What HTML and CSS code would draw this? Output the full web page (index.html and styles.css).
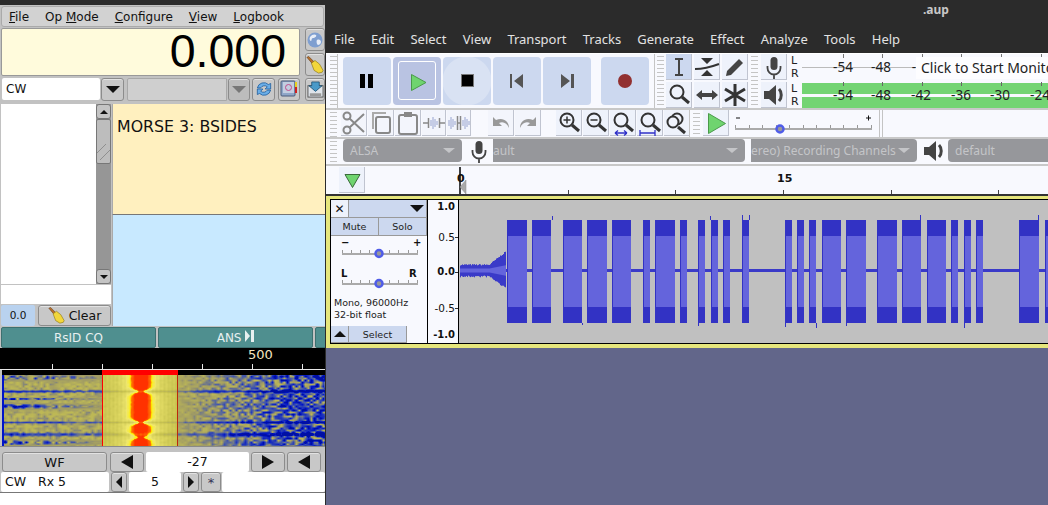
FILE: index.html

```html
<!DOCTYPE html>
<html lang="en">
<head>
  <meta charset="UTF-8" />
  <title>fldigi and Audacity</title>
  <link rel="stylesheet" href="styles.css">
</head>
<body>
  <svg class="defs" width="0" height="0">
    <symbol id="broom" viewBox="0 0 20 20">
      <path d="M1 1.500l2-1 6 6-2 2z" fill="#b8702a" stroke="#5a3412" stroke-width=".6"/>
      <path d="M6 8l4-3 5 4 4 7-1 2-4 1-5-3z" fill="#f2d63c" stroke="#8a7410" stroke-width=".7"/>
    </symbol>
    <symbol id="mic" viewBox="0 0 26 26">
      <rect x="9.500" y="3" width="7" height="13" rx="3.500" fill="#444"/>
      <path d="M6.500 12v2a6.500 6.500 0 0 0 13 0v-2M13 21v4" fill="none" stroke="#444" stroke-width="1.800"/>
    </symbol>
    <symbol id="speaker" viewBox="0 0 26 26">
      <path d="M3 9h5l7-6v20l-7-6H3z" fill="#444"/>
      <path d="M18 7c3 3 3 9 0 12" fill="none" stroke="#444" stroke-width="3"/>
    </symbol>
    <symbol id="glass" viewBox="0 0 26 26">
      <circle cx="11" cy="10" r="6.500" fill="none" stroke="#333" stroke-width="2"/>
      <path d="M16 15l7 6" stroke="#333" stroke-width="3"/>
    </symbol>
  </svg>

  <!-- fldigi window -->
  <div class="fl">
    <div class="fl-menu">
      <span><u>F</u>ile</span><span>Op <u>M</u>ode</span><span><u>C</u>onfigure</span><span><u>V</u>iew</span><span><u>L</u>ogbook</span>
    </div>
    <div class="fl-freq">
      <div class="freq-display">0.000</div>
      <div class="freq-btns">
        <button class="fbtn tall">
          <svg width="16" height="16" viewBox="0 0 16 16"><circle cx="8" cy="8" r="7.500" fill="#7f9fd0"/><path d="M3 5c2-3 5-3 6-2s-1 3-3 3-1 3-2 3-2-2-1-4zM10 8c2-1 4 0 4 2s-2 3-3 3-2-4-1-5z" fill="#e8eef8"/></svg>
        </button>
        <button class="fbtn tall"><svg width="18" height="18"><use href="#broom"/></svg></button>
      </div>
    </div>
    <div class="fl-mode">
      <div class="field cw">CW</div>
      <button class="fbtn arrow"><i class="tri-down"></i></button>
      <div class="field off"></div>
      <button class="fbtn arrow off-btn"><i class="tri-down gray"></i></button>
      <button class="fbtn sq">
        <svg width="20" height="20" viewBox="0 0 18 18"><path d="M3 8a6 6 0 0 1 10-3l2-1v5h-5l2-2a4 4 0 0 0-6 1z" fill="#6aaee8" stroke="#1c5a9a" stroke-width=".7"/><path d="M15 10a6 6 0 0 1-10 3l-2 1V9h5l-2 2a4 4 0 0 0 6-1z" fill="#6aaee8" stroke="#1c5a9a" stroke-width=".7"/></svg>
      </button>
      <button class="fbtn sq book">
        <svg width="18" height="18" viewBox="0 0 18 18"><rect x="1" y="1" width="14" height="15" rx="1" fill="#8fa6c8" stroke="#4a5a7a"/><rect x="3" y="2" width="11" height="11" fill="#c3cde0"/><circle cx="8.500" cy="7.500" r="3" fill="none" stroke="#c04a8a"/><rect x="15" y="2" width="2" height="5" fill="#e8d020"/><rect x="15" y="7" width="2" height="6" fill="#d02020"/></svg>
      </button>
      <button class="fbtn sq last">
        <svg width="17" height="17" viewBox="0 0 18 18"><rect x="1" y="5" width="16" height="12" fill="#dfe4ea" stroke="#555"/><rect x="3" y="13" width="12" height="3" fill="#999"/><path d="M5 1h8v4h3l-7 6-7-6h3z" fill="#4a9ac8" stroke="#1c4a6a" stroke-width=".8"/></svg>
      </button>
    </div>
    <div class="fl-main">
      <div class="fl-side">
        <div class="listbox">
          <div class="list-white"></div>
          <div class="scroll">
            <button class="sbtn"><i class="tri-up"></i></button>
            <div class="sthumb"></div>
            <div class="strack"></div>
            <button class="sbtn"><i class="tri-down small"></i></button>
          </div>
        </div>
        <div class="side-input"></div>
        <div class="side-foot">
          <div class="val">0.0</div>
          <button class="fbtn clear"><svg width="17" height="17"><use href="#broom"/></svg>Clear</button>
        </div>
      </div>
      <div class="fl-text">
        <div class="rx">MORSE 3: BSIDES</div>
        <div class="tx"></div>
      </div>
    </div>
    <div class="fl-macros">
      <button class="macro m1">RsID CQ</button>
      <button class="macro m2">ANS <svg width="9" height="12" viewBox="0 0 9 12"><path d="M0 0l5 6-5 6z" fill="#e8f0f0"/><rect x="6" width="3" height="12" fill="#e8f0f0"/></svg></button>
      <button class="macro m3"></button>
    </div>
    <svg class="fl-scale" width="325" height="22">
      <rect width="325" height="22" fill="#000"/>
      <rect y="21" width="325" height="1" fill="#e8e8e8"/>
      <path d="M52.500 16v5M102.500 16v5M152.500 16v5M202.500 16v5M252.500 16v5M302.500 16v5" stroke="#e8e8e8"/>
      <text x="248" y="11" class="scale-num">500</text>
    </svg>
    <canvas id="waterfall" class="waterfall" width="323" height="76"></canvas>
    <div class="fl-ctrl">
      <button class="fbtn wf">WF</button>
      <button class="fbtn nudge"><i class="tri-left"></i></button>
      <div class="field db">-27</div>
      <button class="fbtn nudge"><i class="tri-right"></i></button>
      <button class="fbtn nudge"><i class="tri-left"></i></button>
    </div>
    <div class="fl-status">
      <div class="field st-mode">CW&nbsp;&nbsp;&nbsp;Rx 5</div>
      <button class="fbtn step"><i class="tri-left thin"></i></button>
      <div class="field st-num">5</div>
      <button class="fbtn step"><i class="tri-right thin"></i></button>
      <button class="fbtn star">*</button>
      <div class="field st-rest"></div>
    </div>
    <div class="fl-foot"></div>
  </div>

  <!-- audacity window -->
  <div class="au">
    <div class="au-title">.aup</div>
    <div class="au-menu">
      <span>File</span><span>Edit</span><span>Select</span><span>View</span><span>Transport</span><span>Tracks</span><span>Generate</span><span>Effect</span><span>Analyze</span><span>Tools</span><span>Help</span>
    </div>

    <div class="tb tb1">
      <div class="grip"></div>
      <div class="transport">
        <button class="tbtn">
          <svg width="48" height="48"><path d="M17 17h5v14h-5zM25 17h5v14h-5z" fill="#000"/></svg>
        </button>
        <button class="tbtn pressed">
          <svg width="48" height="48"><path d="M18.500 17.500l14.500 8-14.500 8z" fill="#6fd46f" stroke="#4a9a4a"/></svg>
        </button>
        <button class="tbtn hover">
          <svg width="48" height="48"><rect x="18.500" y="17.500" width="12" height="12" fill="#000" stroke="#777"/></svg>
        </button>
        <button class="tbtn">
          <svg width="48" height="48"><path d="M17 17h2v14h-2zM30 17v14l-9-7z" fill="#555"/></svg>
        </button>
        <button class="tbtn">
          <svg width="48" height="48"><path d="M18 17v14l9-7zM28 17h3v14h-3z" fill="#555"/></svg>
        </button>
        <button class="tbtn rec">
          <svg width="48" height="48"><circle cx="24" cy="24" r="7" fill="#923030"/></svg>
        </button>
      </div>
      <div class="vsep"></div>
      <div class="grip"></div>
      <div class="tools">
        <button class="tool on"><svg width="26" height="26"><path d="M9 5h8M9 21h8M13 5v16" stroke="#444" stroke-width="2" fill="none"/></svg></button>
        <button class="tool"><svg width="26" height="26"><path d="M7 4h12l-6 6zM7 22h12l-6-6z" fill="#333"/><path d="M1 15c8 0 16-2 24-5" stroke="#333" stroke-width="2" fill="none"/></svg></button>
        <button class="tool"><svg width="26" height="26"><path d="M4 22l1-5L17 5l4 4L9 21z" fill="#444"/></svg></button>
        <button class="tool"><svg width="26" height="26"><use href="#glass"/></svg></button>
        <button class="tool"><svg width="26" height="26"><path d="M2 13l6-5v3h10V8l6 5-6 5v-3H8v3z" fill="#444"/></svg></button>
        <button class="tool"><svg width="26" height="26"><path d="M13 2v22M3 7l20 12M23 7L3 19" stroke="#333" stroke-width="3"/></svg></button>
      </div>
      <div class="grip"></div>
      <div class="meters">
        <div class="meter-row">
          <button class="tool"><svg width="26" height="26"><use href="#mic"/></svg></button>
          <div class="lr"><span>L</span><span>R</span></div>
          <svg class="meter" width="246" height="27">
            <path d="M0 13.500h115" stroke="#bbb"/>
            <path d="M41.500 0v4M80.500 0v4M120.500 0v4M159.500 0v4M199.500 0v4M239.500 0v4" stroke="#777"/>
            <text x="41" y="18" class="mtxt">-54</text><text x="79" y="18" class="mtxt">-48</text><text x="112" y="18" class="mtxt">-</text>
          </svg>
          <div class="monitor">Click to Start Monitoring</div>
        </div>
        <div class="meter-row low">
          <button class="tool"><svg width="26" height="26"><use href="#speaker"/></svg></button>
          <div class="lr"><span>L</span><span>R</span></div>
          <svg class="meter" width="246" height="26">
            <rect y="1" width="246" height="11" fill="#73d473"/><rect y="15" width="246" height="11" fill="#73d473"/>
            <path d="M41.500 0v4M80.500 0v4M120.500 0v4M159.500 0v4M199.500 0v4M239.500 0v4" stroke="#666"/>
            <text x="41" y="18" class="mtxt">-54</text><text x="79" y="18" class="mtxt">-48</text><text x="119" y="18" class="mtxt">-42</text><text x="159" y="18" class="mtxt">-36</text><text x="198" y="18" class="mtxt">-30</text><text x="238" y="18" class="mtxt">-24</text>
          </svg>
        </div>
      </div>
    </div>

    <div class="tb tb2">
      <div class="grip"></div>
      <button class="tool ghost"><svg width="26" height="26"><circle cx="6" cy="20" r="3.500" fill="none" stroke="#888" stroke-width="2"/><circle cx="6" cy="6" r="3.500" fill="none" stroke="#888" stroke-width="2"/><path d="M8 8l15 14M8 18L23 4" stroke="#888" stroke-width="2"/></svg></button>
      <button class="tool ghost"><svg width="26" height="26"><path d="M5 19V3h13" fill="none" stroke="#aaa" stroke-width="2"/><rect x="8" y="7" width="14" height="16" rx="2" fill="none" stroke="#888" stroke-width="2"/></svg></button>
      <button class="tool ghost"><svg width="26" height="26"><rect x="4" y="5" width="18" height="19" rx="2" fill="none" stroke="#888" stroke-width="2"/><rect x="9" y="2" width="8" height="5" fill="#888"/></svg></button>
      <button class="tool ghost slim"><svg width="24" height="26"><path d="M1 13h5M18 13h5" stroke="#888" stroke-width="1.500"/><path d="M6.500 8v10M17.500 8v10" stroke="#888" stroke-width="1.500"/><path d="M9 10v6M11 7v12M13 9v8M15 11v4" stroke="#98a4d0"/></svg></button>
      <button class="tool ghost slim"><svg width="24" height="26"><path d="M10.500 6v14M13.500 6v14M11 13h2" stroke="#888" stroke-width="1.500"/><path d="M2 10v6M4 7v12M6 9v8M8 11v4M16 10v6M18 7v12M20 9v8M22 11v4" stroke="#98a4d0"/></svg></button>
      <div class="tb-gap"></div>
      <button class="tool ghost"><svg width="26" height="26"><path d="M5 7v9h9l-3-3c4-2 8 0 10 5 0-7-6-11-13-8z" fill="#999"/></svg></button>
      <button class="tool ghost"><svg width="26" height="26"><path d="M21 7v9h-9l3-3c-4-2-8 0-10 5 0-7 6-11 13-8z" fill="#999"/></svg></button>
      <div class="tb-gap small"></div>
      <button class="tool"><svg width="26" height="26"><use href="#glass"/><path d="M7.500 10h7M11 6.500v7" stroke="#333" stroke-width="1.500"/></svg></button>
      <button class="tool"><svg width="26" height="26"><use href="#glass"/><path d="M7.500 10h7" stroke="#333" stroke-width="1.500"/></svg></button>
      <button class="tool"><svg width="26" height="26"><use href="#glass"/><path d="M5 23h12M5 23l3-2.500M5 23l3 2.500M17 23l-3-2.500M17 23l-3 2.500" stroke="#3030c8" stroke-width="1.300" fill="none"/></svg></button>
      <button class="tool"><svg width="26" height="26"><use href="#glass"/><path d="M3 23h15M3 20v6M18 20v6" stroke="#3030c8" stroke-width="1.300" fill="none"/></svg></button>
      <button class="tool"><svg width="26" height="26"><circle cx="13" cy="9" r="5.500" fill="none" stroke="#333" stroke-width="2"/><circle cx="9" cy="12" r="5.500" fill="#f0f3fc" stroke="#333" stroke-width="2"/><path d="M14 17l7 6" stroke="#333" stroke-width="3"/></svg></button>
      <div class="vsep mid"></div>
      <div class="grip short"></div>
      <button class="tool"><svg width="26" height="26"><path d="M5.500 3.500l17 10-17 10z" fill="#6fd46f" stroke="#4a9a4a"/></svg></button>
      <svg class="gain" width="142" height="27">
        <path d="M3 8h4M133 8h5M135.500 5.500v5" stroke="#111"/>
        <path d="M2 19h137" stroke="#aaa" stroke-width="2"/>
        <path d="M2.500 15v3M16.500 15v3M29.500 15v3M43.500 15v3M56.500 15v3M70.500 15v3M83.500 15v3M97.500 15v3M110.500 15v3M124.500 15v3M138.500 15v3" stroke="#999"/>
        <circle cx="47" cy="19" r="3.500" fill="#999" stroke="#4f5ce8" stroke-width="2.500"/>
      </svg>
      <div class="vsep end"></div>
    </div>

    <div class="tb tb3">
      <div class="grip"></div>
      <div class="combo alsa">ALSA<i class="tri-down pale"></i></div>
      <svg class="dev-ic" width="26" height="26"><use href="#mic"/></svg>
      <div class="combo rec-dev">ault<i class="tri-down pale"></i></div>
      <div class="combo chans"><span class="clip">ereo) Recording Channels</span><i class="tri-down pale"></i></div>
      <svg class="dev-ic spk" width="26" height="26"><use href="#speaker"/></svg>
      <div class="combo play-dev">default</div>
    </div>

    <div class="timeline">
      <button class="tool green"><svg width="26" height="26"><path d="M6 7.500h15l-7.500 13z" fill="#6fd46f" stroke="#3a6a3a"/></svg></button>
      <svg class="time-svg" width="683" height="28">
        <path d="M95 1v27" stroke="#000" stroke-width="1.500"/>
        <path d="M101 14v14l-6-7z" fill="#aaa" stroke="#888" stroke-width=".5"/>
        <path d="M203.500 24v4M310.500 24v4M418.500 24v4M526.500 24v4M633.500 24v4" stroke="#444"/>
        <text x="92" y="16" class="time-num">0</text>
        <text x="412" y="16" class="time-num">15</text>
      </svg>
    </div>

    <div class="track">
      <div class="track-panel">
        <div class="tp-top">
          <button class="pbtn close">✕</button>
          <button class="pbtn name"><i class="tri-down"></i></button>
        </div>
        <div class="tp-ms">
          <button class="pbtn">Mute</button>
          <button class="pbtn">Solo</button>
        </div>
        <svg class="tp-slider" width="96" height="30">
          <text x="10" y="10" class="pm">−</text><text x="82" y="10" class="pm">+</text>
          <path d="M11 18h76" stroke="#aaa" stroke-width="2"/>
          <path d="M11.500 14v3M20.500 14v3M29.500 14v3M38.500 14v3M48.500 14v3M58.500 14v3M67.500 14v3M77.500 14v3M86.500 14v3" stroke="#999"/>
          <circle cx="48" cy="17.500" r="3.500" fill="#999" stroke="#4f5ce8" stroke-width="2.500"/>
        </svg>
        <svg class="tp-slider" width="96" height="30">
          <text x="10" y="11" class="pm">L</text><text x="78" y="11" class="pm">R</text>
          <path d="M11 18h76" stroke="#aaa" stroke-width="2"/>
          <path d="M11.500 14v3M20.500 14v3M29.500 14v3M38.500 14v3M48.500 14v3M58.500 14v3M67.500 14v3M77.500 14v3M86.500 14v3" stroke="#999"/>
          <circle cx="48" cy="17.500" r="3.500" fill="#999" stroke="#4f5ce8" stroke-width="2.500"/>
        </svg>
        <div class="tp-info">Mono, 96000Hz<br>32-bit float</div>
        <div class="tp-foot">
          <button class="pbtn collapse"><i class="tri-up"></i></button>
          <button class="pbtn select">Select</button>
        </div>
      </div>
      <div class="vruler">
        <span class="b l1">1.0</span><span class="l2">0.5</span><span class="b l3">0.0</span><span class="l4">-0.5</span><span class="b l5">-1.0</span>
      </div>
      <svg id="wave" class="wave" width="589" height="145"></svg>
    </div>
  </div>

  <script src="app.js"></script>
</body>
</html>
```

FILE: styles.css

```css
* { box-sizing: border-box; }
html, body {
  margin: 0;
  width: 1048px;
  height: 505px;
  overflow: hidden;
  background: #2b2b2b;
}
.defs { position: absolute; }
button { margin: 0; padding: 0; font: inherit; color: inherit; }
i { display: block; width: 0; height: 0; }

.tri-down { border: 7px solid transparent; border-top: 7px solid #111; border-bottom: 0; }
.tri-down.gray { border-top-color: #777; }
.tri-down.small { border-width: 4px; border-bottom: 0; border-top-color: #111; }
.tri-down.pale { flex: none; border-width: 5px 6px 0; border-top-color: #c4c5c8; }
.tri-up { border: 4px solid transparent; border-bottom: 4px solid #111; border-top: 0; }
.tri-left { border: 7px solid transparent; border-right: 12px solid #111; border-left: 0; }
.tri-right { border: 7px solid transparent; border-left: 12px solid #111; border-right: 0; }
.tri-left.thin { border-width: 6px 6px 6px 0; }
.tri-right.thin { border-width: 6px 0 6px 6px; }

/* fldigi */
.fl {
  position: absolute;
  left: 0;
  top: 5px;
  width: 325px;
  height: 500px;
  background: #c2c2c2;
  font-family: "DejaVu Sans", sans-serif;
  font-size: 12px;
  color: #111;
  overflow: hidden;
}
.fbtn {
  display: flex;
  flex: none;
  align-items: center;
  justify-content: center;
  background: #c8c8c8;
  border: 1px solid #8c8c8c;
  border-radius: 3px;
  box-shadow: inset 0 1px #e2e2e2;
}
.field {
  flex: none;
  background: #fff;
  border-radius: 2px;
  height: 100%;
}
.fl-menu {
  display: flex;
  gap: 16px;
  height: 21px;
  margin: 1px 1px 0;
  padding: 2px 0 0 7px;
  background: #d2d2d2;
  border: 1px solid #aaa;
  border-radius: 3px;
  font-size: 12px;
  line-height: 16px;
}
.fl-freq { display: flex; height: 48px; margin: 1px 0 0 1px; }
.freq-display {
  flex: none;
  width: 299px;
  padding-right: 13px;
  background: #fffbdc;
  border: 1px solid #999;
  border-radius: 2px;
  font-family: "Liberation Sans", sans-serif;
  font-size: 46.500px;
  line-height: 44px;
  text-align: right;
  color: #000;
}
.freq-btns { display: flex; flex: none; flex-direction: column; gap: 2px; margin-left: 5px; width: 20px; }
.fbtn.tall { height: 23px; }
.fl-mode { display: flex; height: 24px; margin: 1px 0 0 2px; align-items: center; }
.field.cw { width: 98px; height: 22px; padding-left: 4px; line-height: 22px; }
.fbtn.arrow { width: 23px; height: 23px; margin-left: 1px; }
.field.off {
  width: 100px;
  height: 23px;
  margin-left: 3px;
  background: #cfcfcf;
  border: 1px solid #a8a8a8;
  border-radius: 2px 0 0 2px;
}
.fbtn.off-btn { width: 22px; margin-left: 1px; background: #bcbcbc; }
.fbtn.sq { width: 23px; height: 23px; margin-left: 2px; }
.fbtn.book { width: 22px; margin-left: 3px; }
.fbtn.last { width: 20px; margin-left: 5px; }
.fl-main { display: flex; height: 222px; margin: 3px 0 0 1px; }
.fl-side { display: flex; flex: none; flex-direction: column; width: 110px; }
.listbox { display: flex; height: 180px; }
.list-white { flex: 1; background: #fff; }
.scroll { display: flex; flex-direction: column; width: 15px; background: #969696; }
.sbtn {
  display: flex;
  flex: none;
  align-items: center;
  justify-content: center;
  height: 15px;
  background: #c4c4c4;
  border: 1px solid #777;
  border-radius: 3px;
}
.sthumb {
  flex: none;
  height: 45px;
  border: 1px solid #777;
  border-radius: 2px;
  background: repeating-linear-gradient(135deg, transparent 0 6px, #8f8f8f 6px 7px) center 24px / 100% 16px no-repeat, #bdbdbd;
}
.strack { flex: 1; }
.side-input { height: 19px; margin-top: 1px; background: #fff; }
.side-foot { display: flex; height: 21px; margin-top: 1px; gap: 3px; }
.val {
  width: 34px;
  background: #b9d2ef;
  border-radius: 2px;
  text-align: center;
  font-size: 10.500px;
  line-height: 21px;
}
.fbtn.clear { width: 73px; gap: 4px; font-size: 12.500px; }
.fl-text { width: 213px; margin-left: 1px; }
.rx {
  height: 111px;
  padding: 13px 0 0 4px;
  background: #fff0bf;
  border-bottom: 1px solid #777;
  border-left: 1px solid #aaa;
  font-size: 15.800px;
  line-height: 20px;
}
.tx { height: 111px; background: #c8e9ff; border-left: 1px solid #aaa; }
.fl-macros { display: flex; gap: 2px; height: 22px; margin: 0 0 0 1px; padding-top: 1px; }
.macro {
  flex: none;
  height: 21px;
  background: #4f8f8f;
  border: 1px solid #3d7070;
  border-radius: 2px;
  color: #e8f0f0;
  font-size: 12px;
}
.macro.m1, .macro.m2 { width: 155px; }
.macro.m3 { width: 12px; }
.fl-scale { display: block; }
.scale-num { fill: #f5e6c0; font-size: 13px; }
.waterfall { display: block; margin-left: 2px; }
.fl-ctrl {
  display: flex;
  align-items: center;
  height: 26px;
  padding: 5px 0 0 2px;
  border-top: 1px solid #8a8a8a;
  gap: 2px;
}
.fbtn.wf { width: 105px; height: 20px; font-size: 13px; margin-right: 1px; }
.fbtn.nudge { width: 34px; height: 20px; }
.field.db { width: 103px; height: 20px; text-align: center; font-size: 12.500px; line-height: 20px; }
.fl-status {
  display: flex;
  height: 20px;
  margin-left: 1px;
  gap: 2px;
  align-items: center;
}
.field.st-mode { width: 108px; padding-left: 4px; font-size: 12.500px; line-height: 20px; }
.fbtn.step { width: 16px; height: 20px; }
.field.st-num { width: 52px; text-align: center; font-size: 12.500px; line-height: 20px; }
.fbtn.star { width: 20px; height: 20px; font-size: 13px; color: #335; }
.field.st-rest { flex: 1; margin-left: -1px; }
.fl-foot { height: 13px; background: #fff; border-top: 1px solid #777; }

/* audacity */
.au {
  position: absolute;
  left: 326px;
  top: 0;
  width: 722px;
  height: 505px;
  background: #62668a;
  font-family: "Noto Sans", sans-serif;
  overflow: hidden;
}
.au-title {
  height: 26px;
  padding-left: 597px;
  background: #2b2b2b;
  color: #c8c8c8;
  font-size: 12px;
  font-weight: 700;
  line-height: 20px;
}
.au-menu {
  display: flex;
  gap: 16.200px;
  height: 27px;
  padding: 4px 0 0 8px;
  background: #2b2b2b;
  color: #e2e2e2;
  font-size: 13px;
  line-height: 18px;
}
.tb {
  display: flex;
  background: #f8f9fe;
  border-bottom: 2px solid #c8c8c8;
}
.grip {
  flex: none;
  width: 7px;
  margin: 2px 0;
  background: repeating-linear-gradient(#c4c4c4 0 1px, transparent 1px 4px);
}
.vsep { flex: none; width: 1px; background: #c4c4c4; }
.tb1 { height: 57px; padding-left: 4px; border-top: 1px solid #fff; }
.transport {
  display: flex;
  flex: none;
  gap: 2px;
  width: 317px;
  padding: 3px 0 0 5px;
  border-left: 1px solid #c4c4c4;
}
.tbtn {
  position: relative;
  flex: none;
  width: 48px;
  height: 48px;
  border: 0;
  border-radius: 4px;
  background: #ccd8ef;
}
.tbtn svg { display: block; }
.tbtn.pressed { background: #b9c3e2; }
.tbtn.pressed::after {
  content: "";
  position: absolute;
  inset: 4px 5px 5px 5px;
  border: 1px solid #fff;
  border-radius: 3px;
}
.tbtn.hover { background: radial-gradient(circle at 24px 24px, #d9e2f3 0 24px, #ccd8ef 25px); }
.tbtn.rec { margin-left: 8px; }
.tb1 .vsep + .grip { margin-left: 2px; }
.tools {
  display: grid;
  flex: none;
  grid-template-columns: repeat(3, 26px);
  grid-auto-rows: 26px;
  gap: 2px;
  margin: 0 3px 0 2px;
}
.tool {
  display: block;
  flex: none;
  width: 26px;
  height: 26px;
  background: #eef2fb;
  border: 0;
  border-right: 1px solid #c0c4d0;
  border-bottom: 1px solid #c0c4d0;
}
.tool svg { display: block; }
.tool.on { background: #ccd8ef; }
.meters { position: relative; flex: none; width: 287px; margin-left: 3px; }
.meter-row { display: flex; height: 27px; }
.meter-row.low { height: 26px; margin-top: 1px; }
.lr {
  display: flex;
  flex: none;
  flex-direction: column;
  width: 15px;
  padding-left: 4px;
  color: #222;
  font-family: "DejaVu Sans", sans-serif;
  font-size: 11px;
  line-height: 13px;
}
.meter { display: block; flex: none; }
.mtxt { fill: #222; font-size: 13.500px; text-anchor: middle; }
.monitor {
  position: absolute;
  left: 155px;
  top: 3px;
  width: 140px;
  height: 22px;
  padding-left: 5px;
  background: #fdfdff;
  color: #222;
  font-size: 14px;
  line-height: 22px;
  white-space: nowrap;
}
.tb2 {
  height: 29px;
  padding-left: 4px;
  align-items: flex-start;
  gap: 1px;
}
.tb2 .grip { margin-right: 3px; height: 25px; }
.tool.ghost { background: #f3f5fc; }
.tool.slim { width: 24px; }
.tb-gap { flex: none; width: 15px; }
.tb-gap.small { width: 13px; }
.tb2 .vsep { height: 27px; }
.tb2 .vsep.mid { margin-left: -2px; }
.tb2 .grip.short { margin: 3px 2px 0 2px; height: 22px; }
.gain { display: block; flex: none; margin-left: 3px; }
.tb2 .vsep.end { margin-left: 3px; box-shadow: 3px 0 #c4c4c4; }
.tb3 { height: 27px; padding-left: 4px; align-items: flex-start; }
.tb3 .grip { height: 23px; margin-right: 6px; }
.combo {
  display: flex;
  flex: none;
  align-items: center;
  justify-content: space-between;
  height: 23px;
  background: #96979b;
  border-radius: 4px;
  color: #c4c5c8;
  font-size: 12px;
  padding: 0 7px;
  white-space: nowrap;
  overflow: hidden;
}
.combo.alsa { width: 119px; }
.combo.rec-dev { width: 252px; border-radius: 0 4px 4px 0; padding-left: 0; }
.combo.chans { width: 166px; margin-left: 6px; border-radius: 0 4px 4px 0; padding-left: 0; }
.combo.play-dev { width: 100px; margin-left: 1px; border-radius: 4px 0 0 4px; }
.dev-ic { display: block; flex: none; margin: -1px 1px 0 4px; }
.dev-ic.spk { margin: -1px 0 0 4px; }
.timeline { display: flex; height: 28px; padding-left: 13px; background: #f8f9fe; }
.tool.green { height: 26px; margin-top: 1px; }
.time-svg { display: block; flex: none; }
.time-num { font-family: "DejaVu Sans", sans-serif; font-size: 11px; font-weight: 700; fill: #111; }
.track {
  display: flex;
  height: 154px;
  padding: 3px 0 4px 4px;
  background: #e6e67c;
  border-top: 2px solid #333;
}
.track-panel {
  display: flex;
  flex: none;
  flex-direction: column;
  width: 97px;
  background: #f8f9fe;
  border: 1px solid #000;
  border-right: 0;
  font-family: "DejaVu Sans", sans-serif;
  font-size: 10px;
  color: #222;
}
.pbtn {
  display: flex;
  align-items: center;
  justify-content: center;
  background: #ccd8ef;
  border: 0;
  border-right: 1px solid #999;
  border-bottom: 1px solid #999;
}
.tp-top { display: flex; height: 18px; flex: none; }
.pbtn.close { flex: none; width: 18px; background: #eef2fb; font-size: 12px; font-weight: 700; color: #111; }
.pbtn.name { flex: 1; justify-content: flex-end; padding-right: 2px; }
.tp-ms { display: flex; height: 18px; flex: none; }
.tp-ms .pbtn { flex: 1; font-size: 9.500px; }
.tp-slider { display: block; flex: none; }
.pm { font-size: 10px; font-weight: 700; fill: #111; }
.tp-info { margin: 1px 0 0 3px; line-height: 12px; font-size: 9.500px; }
.tp-foot { display: flex; height: 17px; margin-top: auto; }
.pbtn.collapse { width: 18px; }
.pbtn.collapse .tri-up { border-width: 0 6px 6px; }
.pbtn.select { width: 58px; font-size: 9.500px; }
.vruler {
  position: relative;
  flex: none;
  width: 32px;
  background: #f8f9fe;
  border: 1px solid #000;
  font-family: "DejaVu Sans", sans-serif;
  font-size: 10.500px;
  color: #111;
}
/* labels sit over the ruler at their scale value */
.vruler span { position: absolute; right: 3px; line-height: 12px; }
.vruler .b { font-weight: 700; font-size: 10px; }
.vruler .l1 { top: 1px; }
.vruler .l2 { top: 31px; }
.vruler .l3 { top: 66px; }
.vruler .l4 { top: 102px; }
.vruler .l5 { top: 129px; }
.vruler .l2::after, .vruler .l3::after, .vruler .l4::after {
  content: "";
  position: absolute;
  right: -3px;
  top: 6px;
  width: 3px;
  height: 1px;
  background: #333;
}
.wave {
  display: block;
  flex: none;
  height: 145px;
  background: #c0c0c0;
  border-top: 1px solid #000;
  border-bottom: 1px solid #000;
}
```

FILE: app.js

```js
// seeded noise so the picture stays the same each load
let seed = 7;
function rnd() {
  seed = (seed * 16807) % 2147483647;
  return seed / 2147483647;
}

// waveform bursts, start and end in page x
const bursts = [
  [507,527],[532,551],[563,582],[587,607],[612,631],[643,650],[655,675],[680,687],
  [698,705],[711,718],[723,730],[742,749],[785,792],[797,804],[809,816],[822,841],
  [846,866],[877,897],[902,921],[927,946],[951,958],[964,971],[976,983],[1019,1039],[1045,1050]
];
const spikes = [
  [552,216,220],[710,216,220],[742,215,220],[698,323,326],[785,323,327],[816,323,328],
  [846,323,326],[964,323,328],[920,215,220],[1038,215,220],[582,323,325],[749,215,220]
];

function rect(x, y, w, h, fill) {
  return `<rect x="${x}" y="${y}" width="${w}" height="${h}" fill="${fill}"/>`;
}

let out = '';
out += rect(47, 69, 542, 3, '#3a3ac8');
// noisy lead-in before the first burst
for (let x = 1; x < 47; x++) {
  const swell = x < 30 ? 0 : (x - 30) * 0.8;
  const up = 5 + swell + rnd() * 1.5;
  const down = 5 + swell * 0.9 + rnd() * 2;
  out += rect(x, 70.5 - up, 1, up + down, '#3a3ac8');
  const core = 2 + swell * 0.25;
  out += rect(x, 70.5 - core, 1, core * 2, '#6464dc');
}
bursts.forEach(([a, b]) => {
  out += rect(a - 459, 20, b - a, 103, '#3232c4');
  out += rect(a - 458, 36, b - a - 1, 71, '#6464dc');
});
spikes.forEach(([x, a, b]) => {
  out += rect(x - 459, a - 200, 1, b - a, '#3232c4');
});
document.getElementById('wave').innerHTML = out;

// waterfall colour map
const stops = [
  [0, [0, 0, 60]],
  [0.12, [0, 20, 200]],
  [0.3, [70, 90, 170]],
  [0.45, [160, 155, 100]],
  [0.6, [200, 195, 80]],
  [0.75, [240, 232, 110]],
  [0.84, [255, 240, 0]],
  [0.9, [255, 110, 0]],
  [1, [255, 50, 0]]
];

function colour(v) {
  v = Math.max(0, Math.min(1, v));
  for (let i = 1; i < stops.length; i++) {
    if (v <= stops[i][0]) {
      const [p0, c0] = stops[i - 1];
      const [p1, c1] = stops[i];
      const t = (v - p0) / (p1 - p0);
      return c0.map((c, n) => Math.round(c + (c1[n] - c) * t));
    }
  }
  return stops[stops.length - 1][1];
}

function gauss(y, list) {
  let sum = 0;
  list.forEach(([c, w, s]) => { sum += s * Math.exp(-(((y - c) / w) ** 2)); });
  return sum;
}

const mainBands = [[392, 1.3, 0.36], [423, 1.1, 0.32], [435, 1.8, 0.34]];
const dashRows = [[378, 2.6, 0.3], [399.5, 1.2, 0.26], [407, 2.6, 0.26], [443, 2.4, 0.28]];
const pinches = [[392, 2.8, 0.85], [423, 2.8, 1], [438, 2.4, 0.85]];

// smooth value noise, long cells across and short cells down
const cellW = 3, cellH = 2;
const grid = [];
for (let i = 0; i < 112; i++) {
  grid.push([]);
  for (let j = 0; j < 42; j++) grid[i].push(rnd() - 0.5);
}
function noiseAt(x, y) {
  const fx = x / cellW, fy = y / cellH;
  const i = Math.floor(fx), j = Math.floor(fy);
  const tx = fx - i, ty = fy - j;
  const top = grid[i][j] * (1 - tx) + grid[i + 1][j] * tx;
  const bot = grid[i][j + 1] * (1 - tx) + grid[i + 1][j + 1] * tx;
  return (top * (1 - ty) + bot * ty) * 1.7;
}

const cv = document.getElementById('waterfall');
const g = cv.getContext('2d');
const img = g.createImageData(323, 76);
for (let row = 0; row < 76; row++) {
  const py = row + 371;
  for (let col = 0; col < 323; col++) {
    const px = col + 2;
    let c;
    if (row < 5) {
      c = px >= 102 && px < 178 ? [255, 0, 0] : [0, 0, 0];
    } else {
      const band = gauss(py, mainBands);
      const dash = gauss(py, dashRows);
      const n = noiseAt(col, row);
      let v;
      if (px >= 103 && px < 177) {
        const d = Math.abs(px - 140.5);
        const pinch = Math.max(0, 1 - gauss(py, pinches));
        const core = 2 + 8 * pinch;
        v = 0.6 - band * 0.25 + 0.012 * Math.sin(px * 1.6) + n * 0.02;
        v += 0.14 * Math.exp(-((d / 24) ** 2));
        v += 0.09 * Math.exp(-((d / (core + 5)) ** 4));
        v += 0.2 * Math.exp(-((d / core) ** 4));
      } else if (px < 102) {
        const fade = Math.max(0, (100 - px) / 100);
        v = 0.5 - band * (0.5 + 0.5 * fade) - dash * (0.3 + fade) * (0.7 + n * 1.8) + n * 0.12;
        if (px < 4) v = 0.12;
        v = Math.min(v, 0.56);
      } else {
        const fall = Math.min(1, (px - 177) / 125);
        v = 0.5 - 0.22 * fall - band * (0.35 + 0.8 * fall) + n * (0.05 + 0.32 * fall) - dash * fall * 0.3;
        v = Math.min(v, 0.55);
      }
      c = colour(Math.max(v, 0.09));
    }
    if (row >= 5 && px === 102) c = [255, 0, 0];
    if (row >= 5 && px === 177) c = [190, 40, 10];
    const k = (row * 323 + col) * 4;
    img.data[k] = c[0];
    img.data[k + 1] = c[1];
    img.data[k + 2] = c[2];
    img.data[k + 3] = 255;
  }
}
g.putImageData(img, 0, 0);
```
